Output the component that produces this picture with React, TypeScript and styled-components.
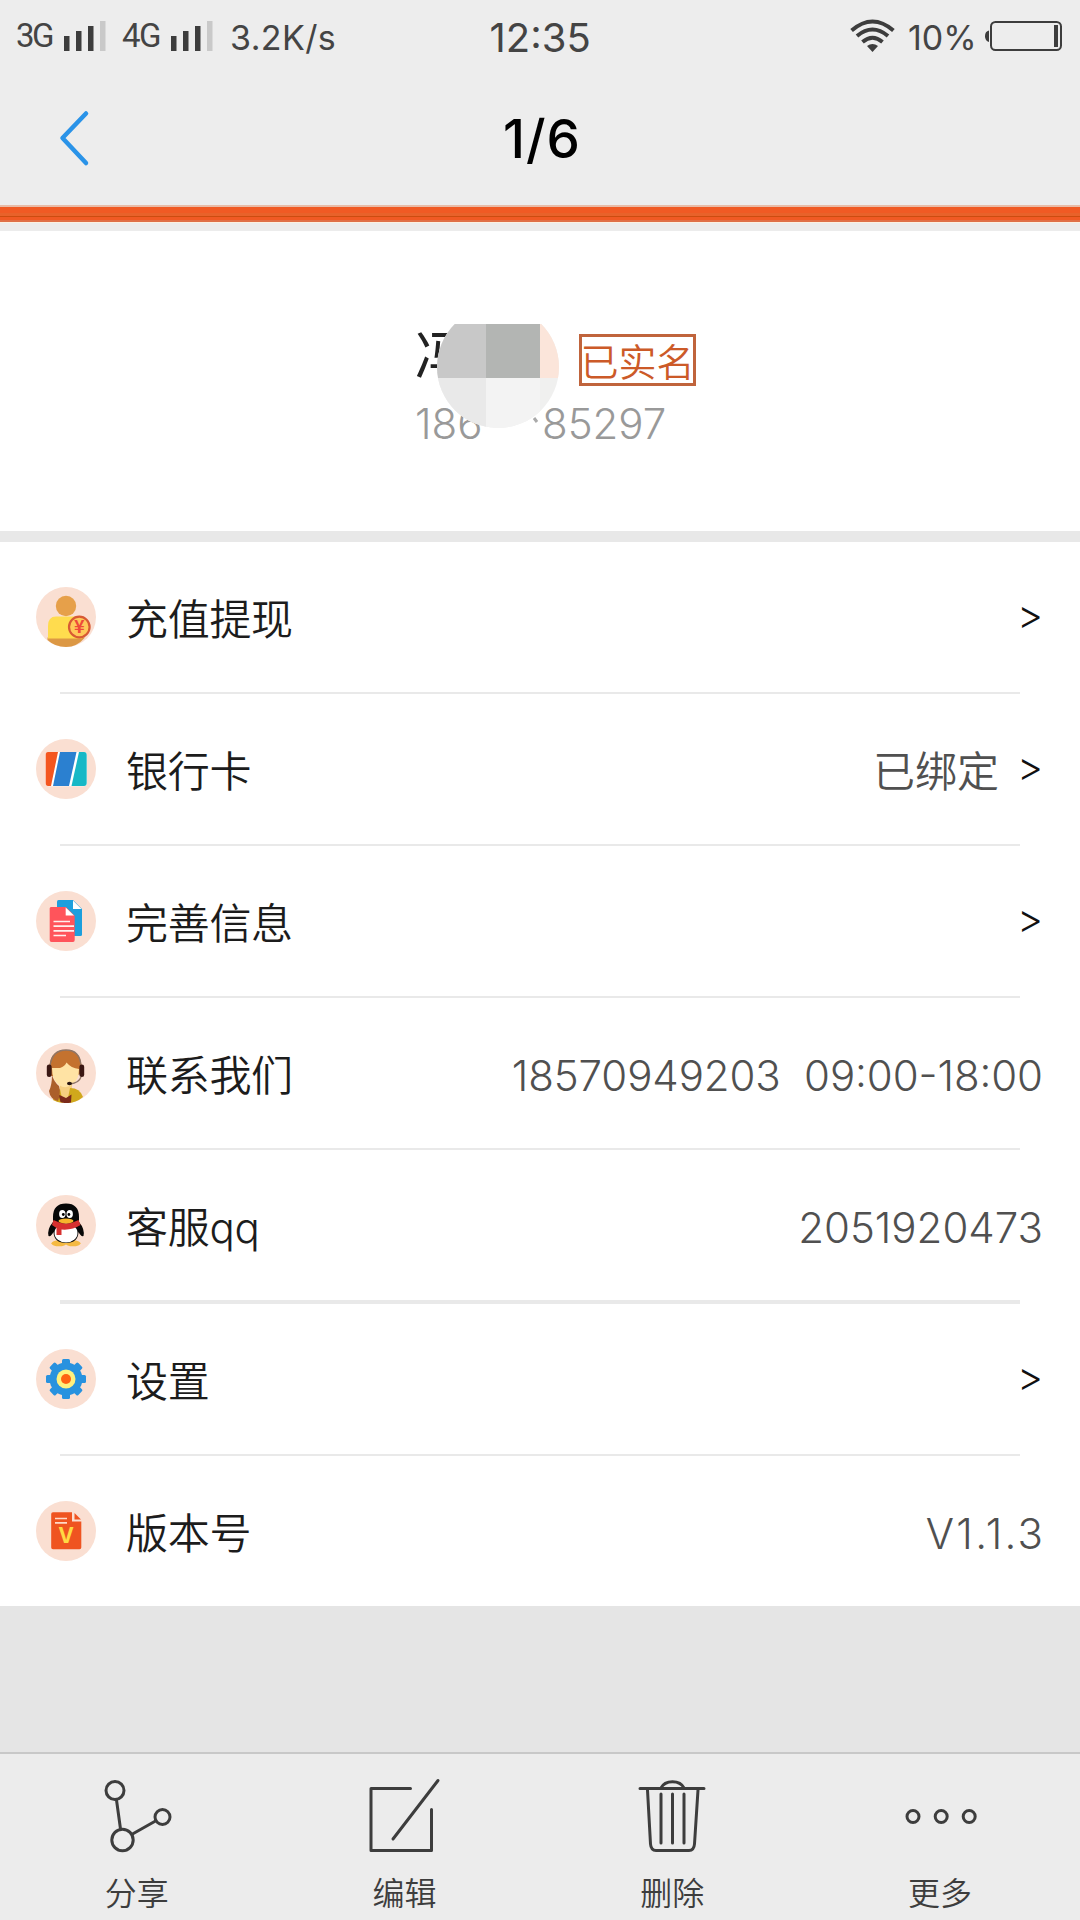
import React from "react";
import styled, { createGlobalStyle } from "styled-components";

const latin = `Inter, "Noto Sans CJK SC", sans-serif`;
const ink = "#3d3d3d";

const GlobalStyle = createGlobalStyle`
  * { box-sizing: border-box; }
  body { margin: 0; background: #e5e5e5; font-family: ${latin}; }
  svg { display: block; flex: none; }
`;

const Screen = styled.div`
  width: 1080px;
  height: 1920px;
  overflow: hidden;
  display: flex;
  flex-direction: column;
  background: #e5e5e5;
`;

const StatusBar = styled.div`
  height: 75px;
  flex: none;
  display: grid;
  grid-template-columns: 1fr auto 1fr;
  background: #ededed;
  color: #444;
`;

const StatusGroup = styled.div<{ $end?: boolean }>`
  height: 75px;
  display: flex;
  align-items: center;
  justify-content: ${(p) => (p.$end ? "flex-end" : "flex-start")};
  padding: ${(p) => (p.$end ? "0 18px 0 0" : "0 0 0 16px")};
`;

const StatusText = styled.span<{ $w: number; $size?: number; $track?: number; $up?: number }>`
  width: ${(p) => p.$w}px;
  flex: none;
  font-size: ${(p) => p.$size ?? 33}px;
  line-height: 40px;
  letter-spacing: ${(p) => p.$track ?? 0}px;
  padding-bottom: ${(p) => p.$up ?? 0}px;
  white-space: nowrap;
`;

const NetworkType = styled(StatusText)`
  font-family: Roboto, sans-serif;
`;

const Clock = styled(StatusText)`
  align-self: center;
`;

const TitleBar = styled.header`
  height: 130px;
  flex: none;
  display: grid;
  grid-template-columns: 100px 1fr 100px;
  background: #ededed;
`;

const BackButton = styled.button`
  border: 0;
  background: none;
  padding: 34px 0 0 58px;
  height: 92px;
`;

const Title = styled.h1`
  margin: 0;
  padding: 32px 0 0 4px;
  text-align: center;
  font-size: 53px;
  line-height: 64px;
  font-weight: 500;
  letter-spacing: 1px;
  color: #000;
`;

const Banner = styled.div`
  height: 26px;
  flex: none;
  background: linear-gradient(
    #e8bca8 0 2px, #f05a24 2px 8px, #e8622a 8px 11px, #cc4c10 11px 12px,
    #f05a24 12px 15px, #e07048 15px 17px, #fbf1e2 17px 18px, #ececec 18px
  );
`;

const Profile = styled.section`
  height: 311px;
  flex: none;
  background: #fff;
  border-bottom: 11px solid #e8e8e8;
  padding: 93px 0 0 415px;
  position: relative;
`;

const NameLine = styled.div`
  display: flex;
  align-items: flex-start;
  height: 75px;
`;

const Surname = styled.span`
  width: 164px;
  padding-top: 3px;
  font-size: 54px;
  line-height: 60px;
  color: #222;
`;

const Badge = styled.span`
  width: 117px;
  height: 52px;
  margin-top: 10px;
  padding-top: 3px;
  border: 3px solid #c0643c;
  display: flex;
  align-items: center;
  justify-content: center;
  color: #cc5a28;
  font-size: 38px;
  font-weight: 350;
  white-space: nowrap;
  line-height: 46px;
`;

const Phone = styled.div`
  display: flex;
  font-size: 42px;
  line-height: 50px;
  font-weight: 320;
  color: #999;
`;

const PhonePart = styled.span<{ $w: number }>`
  width: ${(p) => p.$w}px;
`;

const Mask = styled.svg`
  position: absolute;
  left: 437px;
  top: 93px;
`;

const Menu = styled.ul`
  list-style: none;
  margin: 0;
  padding: 0;
  background: #fff;
  flex: none;
`;

const Row = styled.li`
  display: flex;
  flex-direction: column;
`;

const RowBody = styled.div`
  height: 150px;
  display: flex;
  align-items: center;
  padding: 0 37px 0 36px;
`;

const Divider = styled.div<{ $h: number }>`
  height: ${(p) => p.$h}px;
  margin: 0 60px;
  background: #e9e9e9;
`;

const Label = styled.span`
  flex: 1;
  padding: 5px 0 0 30px;
  font-size: 42px;
  line-height: 60px;
  font-weight: 350;
  letter-spacing: -0.3px;
  color: #1c1c1c;
`;

const Value = styled.span<{ $track?: number }>`
  font-size: 42px;
  line-height: 60px;
  padding-top: 5px;
  font-weight: 350;
  font-feature-settings: "case" 1;
  letter-spacing: ${(p) => p.$track ?? 0}px;
  margin-right: ${(p) => -(p.$track ?? 0)}px;
  color: #505050;
  white-space: pre;
`;

const Arrow = styled.span`
  width: 26px;
  margin-left: 18px;
  padding-bottom: 4px;
  font-size: 40px;
  line-height: 60px;
  display: flex;
  justify-content: center;
  font-weight: 350;
  color: #111;
`;

const Toolbar = styled.nav`
  margin-top: auto;
  height: 168px;
  flex: none;
  border-top: 2px solid #c8c8c8;
  background: #ececec;
  display: grid;
  grid-template-columns: repeat(4, 1fr);
  padding: 0 6px 0 3px;
`;

const Tool = styled.button`
  border: 0;
  padding: 22px 0 0;
  background: none;
  display: flex;
  flex-direction: column;
  align-items: center;
  gap: 15px;
  font: 350 32px/46px ${latin};
  color: ${ink};
`;

const SignalIcon = styled.svg<{ $gap: number }>`
  margin: -3px ${(p) => p.$gap}px 0 0;
`;

const Signal = ({ gap }: { gap: number }) => (
  <SignalIcon $gap={gap} width={42} height={30}>
    <path d="M0 15h5.5v15H0zM12 10h5.5v20H12zM24 5h5.5v25H24z" fill={ink} />
    <path d="M36 0h5.5v30H36z" fill="#c9c9c9" />
  </SignalIcon>
);

const Wifi = () => (
  <SignalIcon $gap={13} width={45} height={34} viewBox="0 0 45 34">
    <g fill="none" stroke={ink} strokeWidth={4}>
      <path d="M1.6 11.5Q22.5-6.5 43.4 11.5" />
      <path d="M7 17Q22.5 4 38 17" />
      <path d="M12.5 23Q22.5 14.5 32.5 23" />
    </g>
    <path d="M17 27Q22.5 22.8 28 27L22.5 33z" fill={ink} />
  </SignalIcon>
);

const Battery = () => (
  <SignalIcon $gap={0} width={77} height={30}>
    <path d="M4 9.5v11.5Q0 20 0 15.2T4 9.5z" fill={ink} />
    <rect x={6} y={1} width={70} height={28} rx={4.5} fill="none" stroke={ink} strokeWidth={2} />
    <rect x={69} y={4} width={4} height={22} fill={ink} />
  </SignalIcon>
);

const IconFrame = ({ children }: { children: React.ReactNode }) => (
  <svg width={60} height={60} viewBox="0 0 60 60">
    <circle cx={30} cy={30} r={30} fill="#fadfd2" />
    {children}
  </svg>
);

const WalletIcon = () => (
  <IconFrame>
    <path d="M11.5 50.5Q30 46 49 50.5Q41 60 30 60T11.5 53z" fill="#dc9844" />
    <circle cx={30} cy={19} r={10.2} fill="#e6a04a" />
    <path d="M12 51.5V39Q12 29.5 20 29.5H41Q46 30 46 36V51.5z" fill="#ffdc4e" />
    <circle cx={43.3} cy={40} r={10.3} fill="#ffc95a" stroke="#d85a34" strokeWidth={2.2} />
    <text x={43.3} y={46.4} fontSize={18} fontWeight={700} fontFamily="Noto Sans CJK SC" textAnchor="middle" fill="#ee4a3a">¥</text>
  </IconFrame>
);

const CardIcon = () => (
  <IconFrame>
    <rect x={9.5} y={13} width={41.5} height={34.3} rx={3.5} fill="#fff" />
    <path d="M12 13H22L15 47H12Q9.7 47 9.7 44V16Q9.7 13 12 13z" fill="#f4561f" />
    <path d="M24 13H40.5L33 47H17z" fill="#2b80d0" />
    <path d="M43 13H48Q50.7 13 50.7 16V44Q50.7 47 48 47H35.5z" fill="#17b8c6" />
  </IconFrame>
);

const DocumentIcon = () => (
  <IconFrame>
    <path d="M22.5 9H37L46 18V43.5Q46 45 44.5 45H21V10.5Q21 9 22.5 9z" fill="#1c9fdd" />
    <path d="M37 9.500V18H45.5z" fill="#fff" />
    <path d="M15 16H30L38.7 24.7V49Q38.7 51 37 51H15.5Q13.7 51 13.7 49V17.5Q13.7 16 15 16z" fill="#ff545b" />
    <path d="M29.7 16.5V24.5H38z" fill="#fff" />
    <path d="M17.5 30.5H34M17.5 35.2H38M17.5 39.8H38M17.5 44.5H30" stroke="#fff0ee" strokeWidth={1.7} />
  </IconFrame>
);

const AgentIcon = () => (
  <IconFrame>
    <path d="M13.5 33V22Q15 7 29.500 7T45.500 22V30L40 33z" fill="#c4722f" />
    <path d="M24 40H36V48L34 55H23z" fill="#f6cf80" />
    <path d="M34 45Q44 45 47 54Q40 60 31 60z" fill="#d0a81c" />
    <path d="M24 46Q19 49 17 57Q22 60 27 60z" fill="#d0a81c" />
    <path d="M22.500 51.500L30 55 35.500 51.500 35 59.500Q29 61 24.500 59z" fill="#7c2a1b" />
    <path d="M16 25H24Q29 23 30.500 19.500Q35 25 43 26Q43 36 37 41Q30 47 23 42Q16 37 16 25z" fill="#ffe3a4" />
    <path d="M16 32Q18 39 23 43Q25 50 22 58Q14 56 13 48Q16 42 16 32z" fill="#ab5f2a" />
    <path d="M14 23Q16 7 30 7T45 23M45 34Q43 40 34 41" fill="none" stroke="#8f7566" strokeWidth={1.3} />
    <rect x={10.8} y={21.5} width={4.8} height={12.5} rx={2.3} fill="#3a1713" />
    <rect x={43.4} y={21.5} width={4.8} height={12.5} rx={2.3} fill="#3a1713" />
    <ellipse cx={33.5} cy={40.5} rx={2.5} ry={1.8} fill="#251411" />
  </IconFrame>
);

const PenguinIcon = () => (
  <IconFrame>
    <ellipse cx={23} cy={48.3} rx={7.5} ry={3} fill="#f5b942" />
    <ellipse cx={37} cy={48.3} rx={7.5} ry={3} fill="#f5b942" />
    <path d="M17 27Q11 34 12.5 41Q15 42 17.5 37Q18 48 30 48T42.5 37Q45 42 47.5 41Q49 34 43 27V22Q43 8.5 30 8.5T17 22z" fill="#070707" />
    <ellipse cx={30} cy={38} rx={11.5} ry={9.5} fill="#fff" />
    <path d="M17.5 25Q30 32 42.5 25L44.5 30Q36 35.5 25.5 34.5V40H20.5V33L16 30z" fill="#d7302f" />
    <ellipse cx={26.3} cy={19} rx={3.2} ry={4} fill="#fff" />
    <ellipse cx={33.7} cy={19} rx={3.2} ry={4} fill="#fff" />
    <circle cx={27.3} cy={19.5} r={1.4} />
    <circle cx={32.9} cy={19.5} r={1.4} />
    <ellipse cx={30} cy={26} rx={7.5} ry={2.5} fill="#f7b52c" />
  </IconFrame>
);

const GearIcon = () => (
  <IconFrame>
    <g fill="#2892df">
      <circle cx={30} cy={30} r={16.5} />
      {[0, 45, 90, 135].map((a) => (
        <rect key={a} x={26} y={10} width={8} height={40} rx={1.5} transform={`rotate(${a} 30 30)`} />
      ))}
    </g>
    <circle cx={30} cy={30} r={9.5} fill="#fff07e" />
    <circle cx={30} cy={30} r={5} fill="#ff6212" />
  </IconFrame>
);

const VersionIcon = () => (
  <IconFrame>
    <path d="M17 11.3H36V20.5H45.3V46.5Q45.3 48.3 43.5 48.3H17Q15.2 48.3 15.2 46.5V13Q15.2 11.3 17 11.3z" fill="#ef5420" />
    <path d="M38.5 12V18.5H45z" fill="#ef5420" />
    <path d="M19 17.5H31M19 21.8H31" stroke="#ffd9c8" strokeWidth={1.7} />
    <text x={30.2} y={42.2} fontSize={21} fontWeight={700} textAnchor="middle" fill="#ffd944">V</text>
  </IconFrame>
);

const ToolIcon = ({ children }: { children: React.ReactNode }) => (
  <svg width={76} height={80} viewBox="0 0 76 80" fill="none" stroke={ink} strokeWidth={3} strokeLinecap="round" strokeLinejoin="round">
    {children}
  </svg>
);

const rows: { label: string; icon: React.ReactNode; value?: string; track?: number; arrow?: boolean; line: number }[] = [
  { label: "充值提现", icon: <WalletIcon />, arrow: true, line: 2 },
  { label: "银行卡", icon: <CardIcon />, value: "已绑定", arrow: true, line: 2 },
  { label: "完善信息", icon: <DocumentIcon />, arrow: true, line: 2 },
  { label: "联系我们", icon: <AgentIcon />, value: "18570949203  09:00-18:00", track: -0.1, line: 2 },
  { label: "客服qq", icon: <PenguinIcon />, value: "2051920473", line: 4 },
  { label: "设置", icon: <GearIcon />, arrow: true, line: 2 },
  { label: "版本号", icon: <VersionIcon />, value: "V1.1.3", track: 2.3, line: 0 },
];

export default function App() {
  return (
    <Screen>
      <GlobalStyle />
      <StatusBar>
        <StatusGroup>
          <NetworkType $w={48} $size={33} $track={-2.5} $up={4}>3G</NetworkType>
          <Signal gap={16} />
          <NetworkType $w={49} $size={33} $track={-1.5} $up={4}>4G</NetworkType>
          <Signal gap={17} />
          <StatusText $w={120} $size={34} $track={0.4}>3.2K/s</StatusText>
        </StatusGroup>
        <Clock $w={101} $size={40}>12:35</Clock>
        <StatusGroup $end>
          <Wifi />
          <StatusText $w={77} $size={34}>10%</StatusText>
          <Battery />
        </StatusGroup>
      </StatusBar>
      <TitleBar>
        <BackButton aria-label="back">
          <svg width={34} height={58} fill="none" stroke="#2a93e8" strokeWidth={4.5} strokeLinecap="round" strokeLinejoin="round">
            <path d="M28 4.5L4.5 29L28 54" />
          </svg>
        </BackButton>
        <Title>1/6</Title>
      </TitleBar>
      <Banner />
      <Profile>
        <NameLine>
          <Surname>冯</Surname>
          <Badge>已实名</Badge>
        </NameLine>
        <Phone>
          <PhonePart $w={127}>186</PhonePart>
          <PhonePart $w={130}>85297</PhonePart>
        </Phone>
        <Mask width={122} height={105} viewBox="0 0 122 105">
          <defs>
            <clipPath id="disc"><circle cx={61} cy={43} r={61} /></clipPath>
          </defs>
          <g clipPath="url(#disc)">
            <rect width={122} height={105} fill="#f0f0ef" />
            <rect width={49} height={54} fill="#c8c8c8" />
            <rect x={49} width={54} height={54} fill="#b3b5b3" />
            <rect x={103} width={19} height={54} fill="#fbe5da" />
            <rect y={54} width={49} height={51} fill="#e9e9e9" />
            <rect x={49} y={54} width={54} height={51} fill="#f3f3f3" />
          </g>
          <path d="M97 94l3 4" stroke="#aaa" strokeWidth={3} />
        </Mask>
      </Profile>
      <Menu>
        {rows.map((r) => (
          <Row key={r.label}>
            <RowBody>
              {r.icon}
              <Label>{r.label}</Label>
              {r.value && <Value $track={r.track}>{r.value}</Value>}
              {r.arrow && <Arrow>&gt;</Arrow>}
            </RowBody>
            <Divider $h={r.line} />
          </Row>
        ))}
      </Menu>
      <Toolbar>
        <Tool>
          <ToolIcon>
            <circle cx={16} cy={14.5} r={9} />
            <circle cx={63.5} cy={41} r={7.5} />
            <circle cx={23.5} cy={64} r={10.7} />
            <path d="M17.5 24L21.5 53M33.5 58L56.5 45" />
          </ToolIcon>
          分享
        </Tool>
        <Tool>
          <ToolIcon>
            <path d="M43.5 12.5H4V74.500H64.500V33.500M26 63L71 4.500" />
          </ToolIcon>
          编辑
        </Tool>
        <Tool>
          <ToolIcon>
            <path d="M6 12.5H70M27 12C31 3.500 46 3.500 50 12M13.500 14L16.500 68Q17 74.500 22 74.500H55Q60 74.500 60.500 68L64 14M27 18V67M38.500 18V67M50 18V67" />
          </ToolIcon>
          删除
        </Tool>
        <Tool>
          <ToolIcon>
            <circle cx={11} cy={40.5} r={6} />
            <circle cx={39.2} cy={40.5} r={6} />
            <circle cx={67.2} cy={40.5} r={6} />
          </ToolIcon>
          更多
        </Tool>
      </Toolbar>
    </Screen>
  );
}
